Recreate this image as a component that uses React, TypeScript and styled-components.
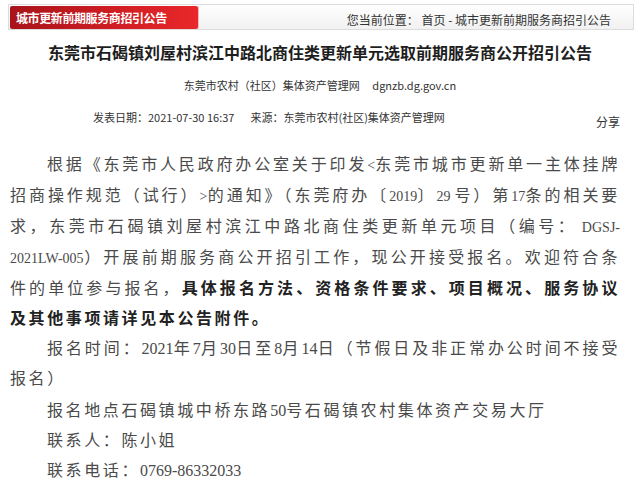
import React from "react";
import styled, { createGlobalStyle } from "styled-components";

const Global = createGlobalStyle`
  html, body { margin: 0; padding: 0; background: #fff; }
  body { font-family: "Noto Sans CJK SC", "Noto Sans", sans-serif; color: #333; }
`;

const Page = styled.div`
  width: 640px;
  height: 502px;
  overflow: hidden;
  display: flex;
  flex-direction: column;
`;

const TopBar = styled.div`
  margin: 4px 6px 0 8px;
  height: 26px;
  box-sizing: border-box;
  border: 1px solid #dcdcdc;
  background: linear-gradient(#ffffff, #f1f1f1);
  display: flex;
  align-items: center;
  justify-content: space-between;
`;

const Tab = styled.div`
  width: 188px;
  height: 23px;
  margin-left: 1px;
  box-sizing: border-box;
  padding-left: 6px;
  display: flex;
  align-items: center;
  background: linear-gradient(to right, #a8141a, #d21e24 60%, #e8282b);
  border-radius: 2px;
  box-shadow: 1px 0 0 #f3b9b9;
  color: #fff;
  font-size: 12px;
  font-weight: bold;
  letter-spacing: -0.4px;
`;

const Crumb = styled.div`
  font-size: 12px;
  color: #333;
  padding-right: 22px;
  padding-top: 4px;
`;

const Title = styled.h1`
  margin: 12px 0 0;
  text-align: center;
  font-size: 16px;
  line-height: 24px;
  font-weight: bold;
  color: #1e1e1e;
  font-family: "Liberation Serif", "Noto Sans CJK SC", serif;
`;

const Source = styled.div`
  margin-top: 10px;
  text-align: center;
  font-size: 11px;
  line-height: 18px;
  color: #333;
  word-spacing: 10px;
`;

const MetaRow = styled.div`
  margin-top: 14px;
  display: flex;
  align-items: flex-end;
  padding: 0 20px 0 93px;
  font-size: 11px;
  line-height: 18px;
  color: #333;
`;

const MetaItem = styled.span`
  margin-right: 16px;
`;

const Share = styled.span`
  margin-left: auto;
  margin-bottom: -5px;
  font-size: 12px;
`;

const Body = styled.div`
  margin-top: 24px;
  width: 610px;
  padding-left: 10px;
  font-family: "Liberation Serif", "Noto Sans CJK SC", serif;
  font-size: 16px;
  line-height: 30px;
  color: #4a4a4a;
  letter-spacing: 2.6px;
`;

const Para = styled.p<{ $gap?: number }>`
  margin: ${(p) => p.$gap ?? 0}px 0 0;
  text-indent: 37px;
  text-align: justify;
`;

const Num = styled.span<{ $small?: boolean }>`
  font-family: "Liberation Serif", serif;
  font-size: ${(p) => (p.$small ? 14 : 16)}px;
  letter-spacing: 0;
`;

const Strong = styled.b`
  color: #222;
`;

export default function App() {
  return (
    <Page>
      <Global />
      <TopBar>
        <Tab>城市更新前期服务商招引公告</Tab>
        <Crumb>您当前位置： 首页 - 城市更新前期服务商招引公告</Crumb>
      </TopBar>
      <Title>东莞市石碣镇刘屋村滨江中路北商住类更新单元选取前期服务商公开招引公告</Title>
      <Source>东莞市农村（社区）集体资产管理网 dgnzb.dg.gov.cn</Source>
      <MetaRow>
        <MetaItem>发表日期：2021-07-30 16:37</MetaItem>
        <MetaItem>来源：东莞市农村(社区)集体资产管理网</MetaItem>
        <Share>分享</Share>
      </MetaRow>
      <Body>
        <Para>
          根据《东莞市人民政府办公室关于印发<Num $small>&lt;</Num>东莞市城市更新单一主体挂牌招商操作规范（试行）<Num $small>&gt;</Num>的通知》（东莞府办〔<Num $small>2019</Num>〕<Num $small>29 </Num>号）第<Num $small>17</Num>条的相关要求，东莞市石碣镇刘屋村滨江中路北商住类更新单元项目（编号：<Num $small> DGSJ-</Num><wbr /><Num $small>2021LW-005</Num>）开展前期服务商公开招引工作，现公开接受报名。欢迎符合条件的单位参与报名，
          <Strong>具体报名方法、资格条件要求、项目概况、服务协议及其他事项请详见本公告附件。</Strong>
        </Para>
        <Para>
          报名时间：<Num>2021</Num>年<Num>7</Num>月<Num>30</Num>日至<Num>8</Num>月<Num>14</Num>日（节假日及非正常办公时间不接受报名）
        </Para>
        <Para $gap={2}>报名地点石碣镇城中桥东路<Num>50</Num>号石碣镇农村集体资产交易大厅</Para>
        <Para>联系人：陈小姐</Para>
        <Para>联系电话：<Num>0769-86332033</Num></Para>
      </Body>
    </Page>
  );
}
